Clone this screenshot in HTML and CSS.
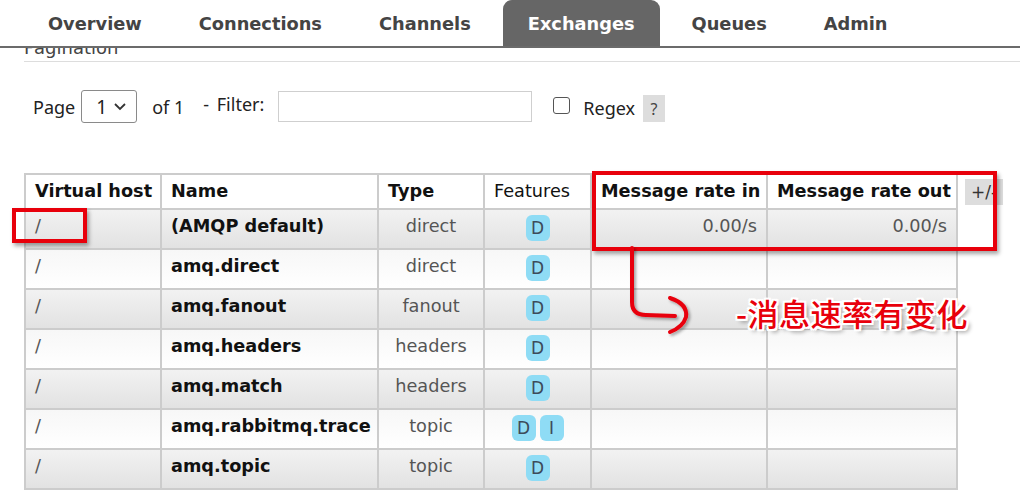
FILE: index.html
```html
<!DOCTYPE html>
<html>
<head>
<meta charset="utf-8">
<link rel="stylesheet" href="styles.css">
</head>
<body>
<div class="page">
  <nav class="tabs">
    <ul>
      <li>Overview</li>
      <li>Connections</li>
      <li>Channels</li>
      <li class="active">Exchanges</li>
      <li>Queues</li>
      <li>Admin</li>
    </ul>
  </nav>
  <main class="content">
    <div class="section-title"><h2>Pagination</h2></div>
    <div class="filter-row">
      <span class="lbl">Page</span>
      <div class="select"><span>1</span>
        <svg width="14" height="10" viewBox="0 0 14 10"><path d="M2 2 L7 7 L12 2" fill="none" stroke="#333" stroke-width="1.8"/></svg>
      </div>
      <span class="lbl of">of 1</span>
      <span class="lbl filter">- Filter:</span>
      <div class="text-input"></div>
      <span class="checkbox"></span>
      <span class="lbl regex">Regex</span>
      <span class="help">?</span>
    </div>
    <div class="table-wrap">
      <table class="list">
        <colgroup>
          <col class="c-vhost"><col class="c-name"><col class="c-type"><col class="c-feat"><col class="c-in"><col class="c-out">
        </colgroup>
        <thead>
          <tr>
            <th>Virtual host</th><th>Name</th><th>Type</th><th class="normal">Features</th><th>Message rate in</th><th>Message rate out</th>
          </tr>
        </thead>
        <tbody>
          <tr class="alt1"><td class="vh">/</td><td class="nm">(AMQP default)</td><td class="ty">direct</td><td class="ft"><span class="badge">D</span></td><td class="rt">0.00/s</td><td class="rt">0.00/s</td></tr>
          <tr class="alt2"><td class="vh">/</td><td class="nm">amq.direct</td><td class="ty">direct</td><td class="ft"><span class="badge">D</span></td><td class="rt"></td><td class="rt"></td></tr>
          <tr class="alt1"><td class="vh">/</td><td class="nm">amq.fanout</td><td class="ty">fanout</td><td class="ft"><span class="badge">D</span></td><td class="rt"></td><td class="rt"></td></tr>
          <tr class="alt2"><td class="vh">/</td><td class="nm">amq.headers</td><td class="ty">headers</td><td class="ft"><span class="badge">D</span></td><td class="rt"></td><td class="rt"></td></tr>
          <tr class="alt1"><td class="vh">/</td><td class="nm">amq.match</td><td class="ty">headers</td><td class="ft"><span class="badge">D</span></td><td class="rt"></td><td class="rt"></td></tr>
          <tr class="alt2"><td class="vh">/</td><td class="nm">amq.rabbitmq.trace</td><td class="ty">topic</td><td class="ft"><span class="badge">D</span><span class="badge">I</span></td><td class="rt"></td><td class="rt"></td></tr>
          <tr class="alt1"><td class="vh">/</td><td class="nm">amq.topic</td><td class="ty">topic</td><td class="ft"><span class="badge">D</span></td><td class="rt"></td><td class="rt"></td></tr>
        </tbody>
      </table>
      <span class="plusminus">+/-</span>
    </div>
  </main>

  <div class="mark mark-vhost"></div>
  <div class="mark mark-rates"></div>
  <svg class="arrow" width="120" height="100" viewBox="0 0 120 100">
    <defs>
      <filter id="sh" x="-20%" y="-20%" width="140%" height="140%">
        <feDropShadow dx="2" dy="2" stdDeviation="1.5" flood-color="#000" flood-opacity="0.35"/>
      </filter>
    </defs>
    <g filter="url(#sh)" fill="none" stroke="#e8000b" stroke-width="4" stroke-linecap="round" stroke-linejoin="round">
      <path d="M32 8 L32 62 Q32 75 46 75 L75 76"/>
      <path d="M70 58 Q88 64 86 77 Q83 87 70 92"/>
    </g>
  </svg>
  <div class="note">-消息速率有变化</div>
</div>
</body>
</html>
```
FILE: styles.css
```css
html, body {
  margin: 0;
  padding: 0;
  background: #fff;
}
body {
  font-family: "DejaVu Sans", Verdana, sans-serif;
  color: #222;
  width: 1020px;
  height: 490px;
  overflow: hidden;
}
.page {
  position: relative;
  width: 1020px;
  height: 490px;
}

/* nav */
.tabs {
  border-bottom: 2px solid #6b6b6b;
  height: 46px;
}
.tabs ul {
  display: flex;
  list-style: none;
  margin: 0;
  padding: 0 0 0 23px;
  height: 46px;
}
.tabs li {
  padding: 0 25px;
  margin-right: 7px;
  height: 46px;
  line-height: 47px;
  font-weight: bold;
  font-size: 17.8px;
  color: #444;
  border-radius: 9px 9px 0 0;
}
.tabs li.active {
  background: #666;
  color: #fff;
}

/* content */
.content {
  padding: 0 0 0 24px;
}
.section-title {
  height: 13px;
  overflow: hidden;
  border-bottom: 1px solid #ddd;
}
.section-title h2 {
  margin: -11px 0 0 0;
  font-size: 18px;
  font-weight: normal;
  color: #444;
  line-height: 22px;
}

.filter-row {
  display: flex;
  align-items: center;
  margin-top: 28px;
  height: 33px;
  font-family: "Noto Sans", "Open Sans", sans-serif;
  font-size: 18px;
  color: #222;
}
.lbl {
  padding-left: 9px;
}
.select {
  margin-left: 6px;
  width: 56px;
  height: 33px;
  box-sizing: border-box;
  border: 1px solid #8a8a8a;
  border-radius: 3px;
  display: flex;
  align-items: center;
  justify-content: space-between;
  padding: 0 9px 0 14px;
  font-size: 19px;
}
.lbl.of {
  padding-left: 15px;
}
.lbl.filter {
  padding-left: 19px;
  margin-top: -5px;
  word-spacing: 3px;
}
.text-input {
  margin-left: 14px;
  width: 254px;
  height: 31px;
  box-sizing: border-box;
  border: 1px solid #cfcfcf;
}
.checkbox {
  margin-left: 21px;
  width: 17px;
  height: 17px;
  box-sizing: border-box;
  border: 1.5px solid #555;
  border-radius: 3px;
  margin-top: -3px;
}
.lbl.regex {
  padding-left: 13px;
  margin-top: 3px;
}
.help {
  margin-left: 8px;
  width: 22px;
  height: 27px;
  background: #ddd;
  color: #444;
  text-align: center;
  line-height: 28px;
  font-size: 16px;
  margin-top: 3px;
}

/* table */
.table-wrap {
  display: flex;
  align-items: flex-start;
  margin-top: 50px;
}
table.list {
  border-collapse: collapse;
  table-layout: fixed;
  width: 934px;
  font-size: 17.7px;
}
.c-vhost { width: 136px; }
.c-name { width: 217px; }
.c-type { width: 106px; }
.c-feat { width: 107px; }
.c-in { width: 176px; }
.c-out { width: 190px; }

table.list th, table.list td {
  border: 2px solid #cccccc;
  padding: 0 9px;
  white-space: nowrap;
  overflow: hidden;
}
table.list th {
  height: 33px;
  text-align: left;
  font-weight: bold;
  color: #111;
  background: #fff;
  line-height: 33px;
}
table.list th.normal {
  font-weight: normal;
}
table.list td {
  height: 35px;
  vertical-align: top;
  line-height: 26px;
  padding-top: 3px;
}
tr.alt1 td {
  background: linear-gradient(#f2f2f2, #e2e2e2);
}
tr.alt2 td {
  background: linear-gradient(#f7f7f7, #ffffff);
}
td.vh {
  color: #555;
}
td.nm {
  font-weight: bold;
  color: #111;
}
td.ty {
  text-align: center;
  color: #555;
}
td.ft {
  text-align: center;
}
td.rt {
  text-align: right;
  color: #555;
}
.badge {
  display: inline-block;
  width: 24px;
  height: 26px;
  line-height: 27px;
  margin: 2px 2px 0;
  border-radius: 6px;
  background: #8fdcf5;
  color: #3d4b5a;
  font-size: 17px;
  text-align: center;
  vertical-align: top;
}
.plusminus {
  margin-left: 7px;
  margin-top: 6px;
  width: 38px;
  height: 26px;
  line-height: 26px;
  background: #ddd;
  color: #333;
  font-size: 17px;
  text-align: center;
}

/* annotations (overlays) */
.mark {
  position: absolute;
  border: 4px solid #e8000b;
  box-sizing: border-box;
  box-shadow: 2px 3px 4px rgba(0, 0, 0, 0.35);
}
.mark-vhost {
  left: 12px;
  top: 208px;
  width: 75px;
  height: 35px;
}
.mark-rates {
  left: 592px;
  top: 171px;
  width: 405px;
  height: 80px;
}
.arrow {
  position: absolute;
  left: 600px;
  top: 240px;
}
.note {
  position: absolute;
  left: 736px;
  top: 293px;
  font-family: "Noto Sans CJK SC", sans-serif;
  font-size: 31px;
  font-weight: 500;
  line-height: 40px;
  letter-spacing: 0.5px;
  color: #e8000b;
  text-shadow:
    -2px 0 0 #fff, 2px 0 0 #fff, 0 -2px 0 #fff, 0 2px 0 #fff,
    -2px -2px 0 #fff, 2px 2px 0 #fff, -2px 2px 0 #fff, 2px -2px 0 #fff,
    3px 3px 4px rgba(0, 0, 0, 0.45);
}
```
